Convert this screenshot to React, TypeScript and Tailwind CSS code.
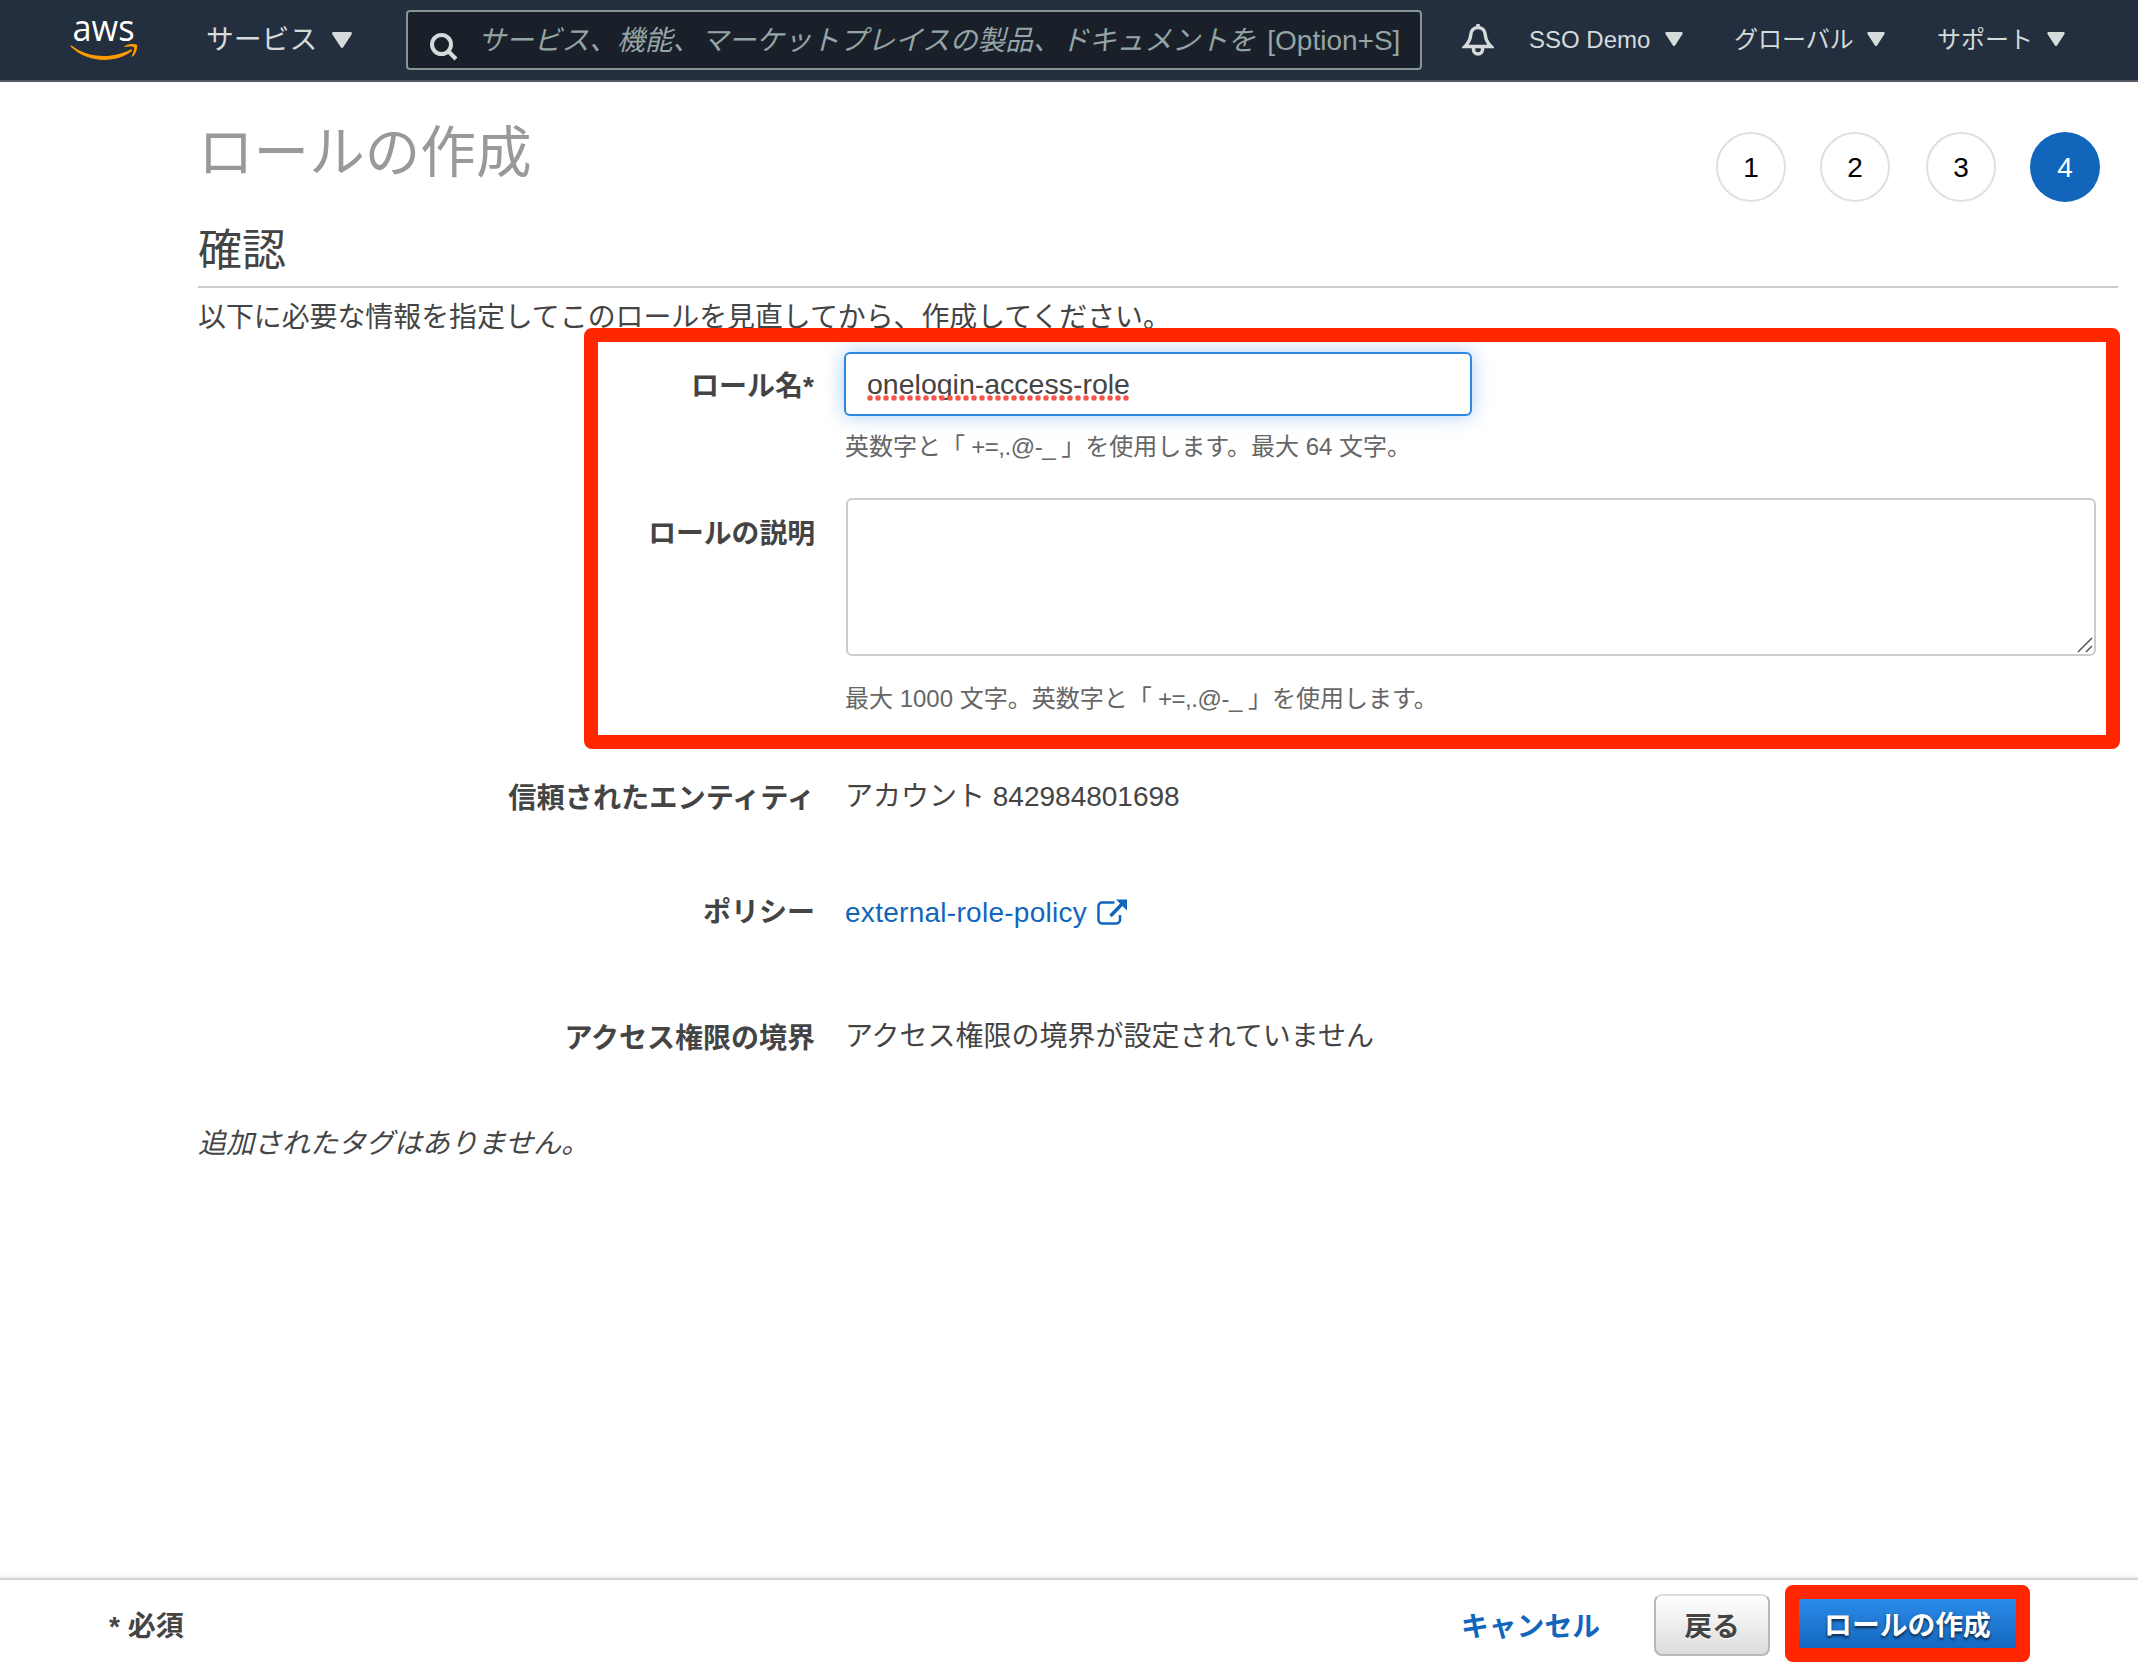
import React, { useState } from 'react';

interface FormRowProps {
  label: string;
  className: string;
  labelClassName?: string;
  children: React.ReactNode;
}

const steps = [1, 2, 3, 4];

function AwsLogo() {
  return (
    <svg className="h-[62px] w-[70px] overflow-visible" viewBox="0 -18 70 62" fill="none">
      <text
        x="2.500"
        y="22.500"
        textLength="62"
        lengthAdjust="spacingAndGlyphs"
        className="fill-white font-['Open_Sans',sans-serif] text-[36px] leading-none font-medium"
      >
        aws
      </text>
      <path
        d="M1.5 27.5C10 34 21 38 34 38c9.500 0 19-2.500 26.500-6.500 1.200-.6 2.200.8 1 1.800C54.500 38.800 44 42 34.500 42 21.500 42 9.500 37 1 29c-.8-.7-.2-2 .5-1.500Z"
        fill="#f90"
      />
      <path
        d="M64 29.500c-1.200-1.400-6.500-.8-9-.4-.8.1-.9-.6-.2-1.100 4.300-3 11.400-2.100 12.200-1.100.8 1-.2 8.200-4.300 11.700-.6.500-1.200.2-.9-.5.900-2.300 3.100-7.200 2.200-8.600Z"
        fill="#f90"
      />
    </svg>
  );
}

function Caret({ className }: { className: string }) {
  return (
    <svg className={className} viewBox="0 0 20 16">
      <path d="M1.500 0h17c1.200 0 1.900 1.300 1.200 2.300l-8.500 13c-.6.9-1.800.9-2.400 0L.3 2.300C-.4 1.300.3 0 1.500 0Z" fill="#d5dbdb" />
    </svg>
  );
}

function SearchIcon() {
  return (
    <svg className="h-7 w-7" viewBox="0 0 28 28" fill="none" stroke="#d5dbdb" strokeWidth="4">
      <circle cx="11.500" cy="11.500" r="9.500" />
      <path d="M18 18l8 8" />
    </svg>
  );
}

function BellIcon() {
  return (
    <svg className="h-8 w-8" viewBox="0 0 32 32" fill="none" stroke="#d5dbdb" strokeWidth="3.500">
      <path d="M16 0v4" />
      <path d="M16 3.500c-4.500 0-7 3.300-7.300 7.500-.3 5-1.700 7.300-5.700 11.500h26c-4-4.200-5.400-6.500-5.700-11.500C23 6.800 20.500 3.500 16 3.500Z" />
      <path d="M11.500 23v2.500a4.500 4.500 0 0 0 9 0V23" />
    </svg>
  );
}

function ExternalLinkIcon() {
  return (
    <svg className="h-[26px] w-[30px]" viewBox="0 0 30 26" fill="none">
      <path
        d="M17.500 3.500H5A3.500 3.500 0 0 0 1.500 7v14A3.500 3.500 0 0 0 5 24.500h14.500A3.500 3.500 0 0 0 23 21v-5"
        stroke="#1166bb"
        strokeWidth="2.500"
      />
      <path d="M13.500 17 25.500 4.500" stroke="#1166bb" strokeWidth="3.500" />
      <path d="M19 .5h11v11Z" fill="#1166bb" />
    </svg>
  );
}

function Header() {
  return (
    <header className="flex h-[82px] shrink-0 items-start border-b-2 border-[#545b64] bg-[#232f3e] text-[#d5dbdb]">
      <div className="ml-[70px] w-[70px]">
        <AwsLogo />
      </div>
      <div className="ml-[66px] mt-5 flex w-[200px] items-center text-[27.800px] leading-[40px]">
        サービス
        <Caret className="ml-[15px] h-4 w-5" />
      </div>
      <div className="mt-[10px] flex h-[60px] w-[1016px] items-center rounded border-2 border-[#879596] bg-[#1a202a] pl-[22px]">
        <div className="mt-[13px] w-7 shrink-0">
          <SearchIcon />
        </div>
        <div className="ml-5 mt-px whitespace-nowrap text-[27.800px] leading-[40px] text-[#95a5a6]">
          <span className="italic">サービス、機能、マーケットプレイスの製品、ドキュメントを</span>
          <span className="ml-[4px] text-[28px]"> [Option+S]</span>
        </div>
      </div>
      <div className="ml-10 mt-6 w-8">
        <BellIcon />
      </div>
      <nav className="mt-5 flex text-[24px] leading-[40px]">
        <div className="ml-[35px] flex w-[205px] items-center">
          <span className="w-[136px]">SSO Demo</span>
          <Caret className="-mt-[2px] h-[14px] w-[18px]" />
        </div>
        <div className="flex w-[203px] items-center">
          <span className="w-[133px]">グローバル</span>
          <Caret className="-mt-[2px] h-[14px] w-[18px]" />
        </div>
        <div className="flex items-center">
          <span className="w-[110px]">サポート</span>
          <Caret className="-mt-[2px] h-[14px] w-[18px]" />
        </div>
      </nav>
    </header>
  );
}

function StepIndicator({ current }: { current: number }) {
  return (
    <ol className="mr-[38px] mt-[50px] flex gap-[34px] text-[28px] text-black">
      {steps.map((step) => (
        <li
          key={step}
          className={
            step === current
              ? 'flex h-[70px] w-[70px] items-center justify-center rounded-full bg-[#1166bb] pt-[2px] text-white'
              : 'flex h-[70px] w-[70px] items-center justify-center rounded-full border-2 border-[#e0e0e0] pt-[2px] nth-3:ml-[2px]'
          }
        >
          {step}
        </li>
      ))}
    </ol>
  );
}

function FormRow({ label, className, labelClassName = '', children }: FormRowProps) {
  return (
    <div className={`flex items-start ${className}`}>
      <div className={`w-[617px] shrink-0 text-right font-bold ${labelClassName}`}>{label}</div>
      <div className="ml-[30px]">{children}</div>
    </div>
  );
}

export default function App() {
  const [description, setDescription] = useState('');

  return (
    <div
      lang="ja"
      className="relative flex h-[1668px] w-[2138px] flex-col overflow-hidden bg-white font-['Liberation_Sans','Noto_Sans_CJK_JP',sans-serif] text-[28px] leading-[40px] text-[#444]"
    >
      <Header />

      <main className="flex-1 pl-[198px] pr-5">
        <div className="-mr-5 flex h-[132px] items-start justify-between">
          <h1 className="mt-[36px] text-[55.600px] leading-[70px] text-[#999]">ロールの作成</h1>
          <StepIndicator current={4} />
        </div>
        <h2 className="h-[74px] border-b-2 border-[#ccc] pt-[7px] text-[44px] leading-[60px]">確認</h2>
        <p className="mt-[10px] h-[54px] text-[27.900px]">
          以下に必要な情報を指定してこのロールを見直してから、作成してください。
        </p>

        <FormRow label="ロール名*" className="h-[146px] pt-[14px]" labelClassName="mt-px pr-px">
          <div className="-ml-px -mt-[14px] flex h-[64px] w-[628px] items-center rounded-md border-2 border-[#2e86de] bg-white pl-[21px] shadow-[0_0_20px_rgba(46,134,222,0.4)]">
            <span className="relative text-[28.500px]">
              onelogin-access-role
              <svg className="absolute left-0 top-[31px] h-[6px] w-[262px]" viewBox="0 0 262 6">
                <path d="M3 3h257" stroke="#f5564c" strokeWidth="5.500" strokeLinecap="round" strokeDasharray="0 8" />
              </svg>
            </span>
          </div>
          <p className="mt-[11px] text-[24px] text-[#666]">
            英数字と「<span className="tracking-[-0.450px]"> +=,.@-_ </span>」を使用します。最大 64 文字。
          </p>
        </FormRow>

        <FormRow label="ロールの説明" className="h-[279px] pt-[16px]" labelClassName="text-[27.800px]">
          <div className="relative -mt-[16px] ml-px h-[158px]">
            <textarea
              value={description}
              onChange={(e) => setDescription(e.target.value)}
              className="block h-[158px] w-[1250px] resize-none rounded-md border-2 border-[#ccc] px-5 py-3"
            />
            <svg className="absolute bottom-[3px] right-[3px] h-4 w-4" viewBox="0 0 16 16" stroke="#555" strokeWidth="1.500">
              <path d="M1 15 15 1M9 15l6-6" />
            </svg>
          </div>
          <p className="mt-[23px] text-[24px] text-[#666]">
            最大 1000 文字。英数字と「<span className="tracking-[-0.450px]"> +=,.@-_ </span>」を使用します。
          </p>
        </FormRow>

        <FormRow label="信頼されたエンティティ" className="h-[116px]" labelClassName="mt-px text-[28.200px]">
          アカウント 842984801698
        </FormRow>
        <FormRow label="ポリシー" className="h-[124px]">
          <a href="#" className="flex items-center text-[#1166bb]">
            <span className="tracking-[0.280px]">external-role-policy</span>
            <span className="-mt-[2px] ml-[10px]">
              <ExternalLinkIcon />
            </span>
          </a>
        </FormRow>
        <FormRow label="アクセス権限の境界" className="h-[107px]" labelClassName="mt-[2px]">
          アクセス権限の境界が設定されていません
        </FormRow>
        <p className="italic">追加されたタグはありません。</p>
      </main>

      <footer className="flex h-[90px] shrink-0 items-start border-t-2 border-[#d5d5d5] bg-white font-bold shadow-[0_-1px_3px_rgba(0,0,0,0.12)]">
        <div className="ml-[109px] mt-[27px]">* 必須</div>
        <a href="#" className="ml-auto mt-[27px] text-[27.800px] text-[#1166bb]">
          キャンセル
        </a>
        <button className="ml-[54px] mt-[14px] h-[62px] w-[116px] rounded-lg border-2 border-[#b8b8b8] border-t-[#ddd] bg-linear-to-b from-white to-[#dcdcdc] pt-[3px] text-[27.800px] [text-shadow:0_1px_0_#fff]">
          戻る
        </button>
        <div className="relative ml-[29px] mr-[122px] mt-[19px]">
          <button className="block h-[49px] w-[217px] bg-linear-to-b from-[#2b8bea] to-[#1468bf] pt-[4px] text-[27.800px] text-white [text-shadow:0_2px_3px_rgba(0,0,0,0.7)]">
            ロールの作成
          </button>
          <div className="pointer-events-none absolute -inset-[14px] rounded-lg border-[14px] border-[#ff2600]" />
        </div>
      </footer>

      {/* highlight around the role name and description fields */}
      <div className="pointer-events-none absolute left-[584px] top-[328px] h-[421px] w-[1536px] rounded-lg border-[14px] border-[#ff2600]" />
    </div>
  );
}
